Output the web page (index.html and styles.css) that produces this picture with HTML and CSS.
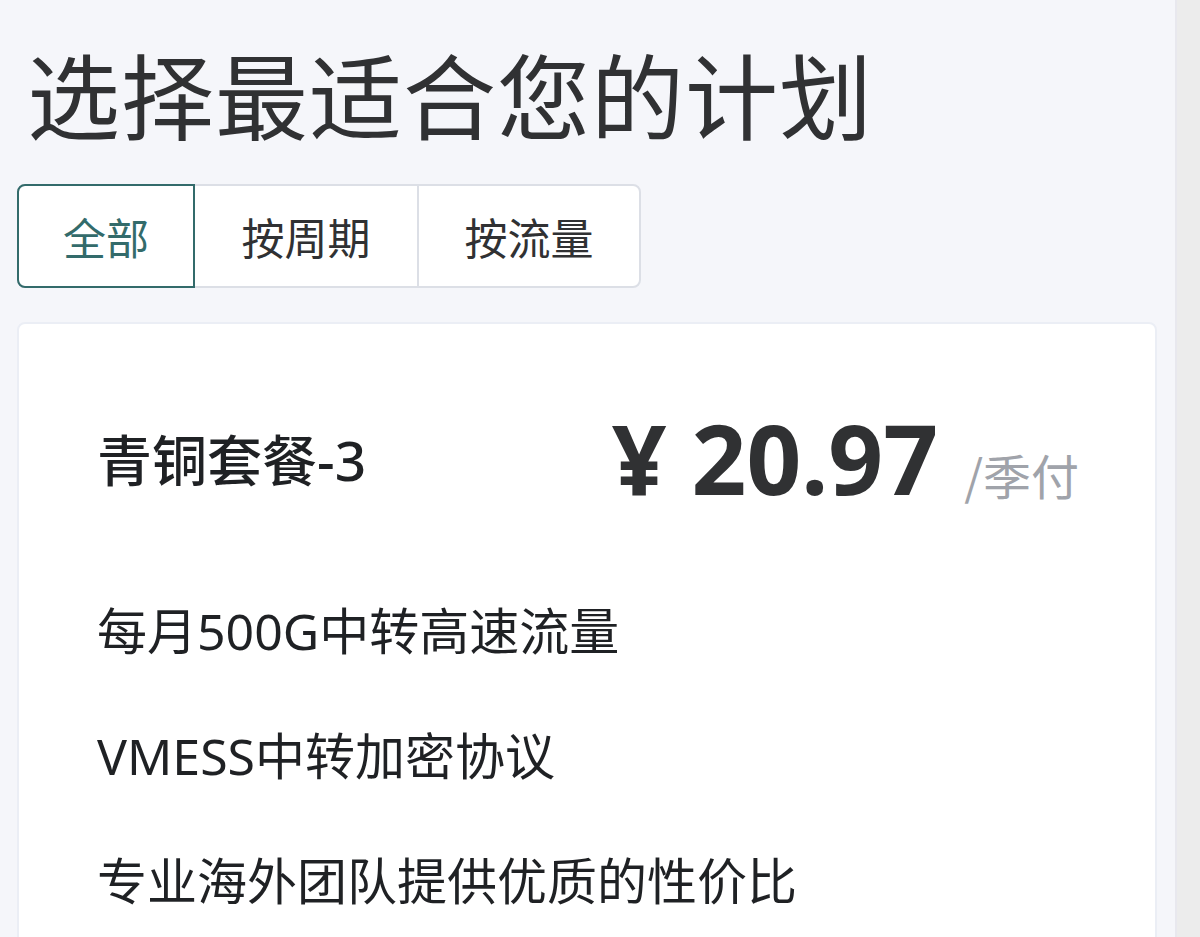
FILE: index.html
```html
<!DOCTYPE html>
<html lang="zh-CN">
<head>
<meta charset="utf-8">
<title>选择最适合您的计划</title>
<link rel="stylesheet" href="styles.css">
</head>
<body>
<div class="page">
  <h1 class="title">选择最适合您的计划</h1>
  <div class="tabs">
    <div class="tab active">全部</div>
    <div class="tab">按周期</div>
    <div class="tab">按流量</div>
  </div>
  <div class="card">
    <div class="card-head">
      <div class="plan-name">青铜套餐-3</div>
      <div class="price">
        <span class="amount">¥ 20.97</span>
        <span class="unit">/季付</span>
      </div>
    </div>
    <ul class="features">
      <li>每月500G中转高速流量</li>
      <li>VMESS中转加密协议</li>
      <li>专业海外团队提供优质的性价比</li>
    </ul>
  </div>
</div>
<div class="sidebar"></div>
</body>
</html>
```

FILE: styles.css
```css
html, body {
  margin: 0;
  padding: 0;
  height: 100%;
}
body {
  display: flex;
  background: #f5f6fa;
  font-family: "Noto Sans", "Noto Sans CJK SC", sans-serif;
  color: #303133;
  overflow: hidden;
}
.page {
  width: 1175px;
  box-sizing: border-box;
  padding: 0 18px 0 17px;
  flex: none;
}
.sidebar {
  flex: 1;
  background: #ececec;
  border-left: 2px solid #e8e8ee;
}
.title {
  font-family: "Noto Sans CJK SC", sans-serif;
  font-size: 93px;
  font-weight: 400;
  line-height: 110px;
  margin: 38px 0 36px 10px;
  color: #303133;
  letter-spacing: 1px;
}
.tabs {
  display: inline-flex;
  background: #fff;
  border: 2px solid #dcdfe6;
  border-radius: 8px;
  height: 104px;
  box-sizing: border-box;
}
.tab {
  display: flex;
  align-items: center;
  justify-content: center;
  font-family: "Noto Sans CJK SC", sans-serif;
  font-size: 43px;
  color: #303133;
  width: 222px;
  border-left: 2px solid #dcdfe6;
  box-sizing: border-box;
}
.tab.active {
  width: 178px;
  border: 2px solid #336b6b;
  border-radius: 8px 0 0 8px;
  margin: -2px 0 -2px -2px;
  color: #336b6b;
}
.tab.active + .tab {
  border-left: none;
}
.card {
  margin-top: 34px;
  background: #fff;
  border: 2px solid #ebeef5;
  border-radius: 8px;
  padding: 75px 76px 0 78px;
  height: 700px;
  box-sizing: border-box;
}
.card-head {
  display: flex;
  align-items: center;
  justify-content: space-between;
  height: 116px;
}
.plan-name {
  font-family: "Noto Sans", "Noto Sans CJK SC", sans-serif;
  font-size: 55px;
  font-weight: 500;
  color: #1f2124;
}
.price {
  display: flex;
  align-items: baseline;
}
.amount {
  font-family: "Noto Sans", sans-serif;
  font-size: 96px;
  font-weight: 700;
  color: #303133;
}
.unit {
  font-family: "Noto Sans CJK SC", sans-serif;
  font-size: 48px;
  color: #a0a3aa;
  margin-left: 26px;
}
.features {
  list-style: none;
  margin: 54px 0 0;
  padding: 0;
}
.features li {
  font-family: "Noto Sans", "Noto Sans CJK SC", sans-serif;
  font-size: 50px;
  line-height: 125px;
  color: #1f2124;
}
```
